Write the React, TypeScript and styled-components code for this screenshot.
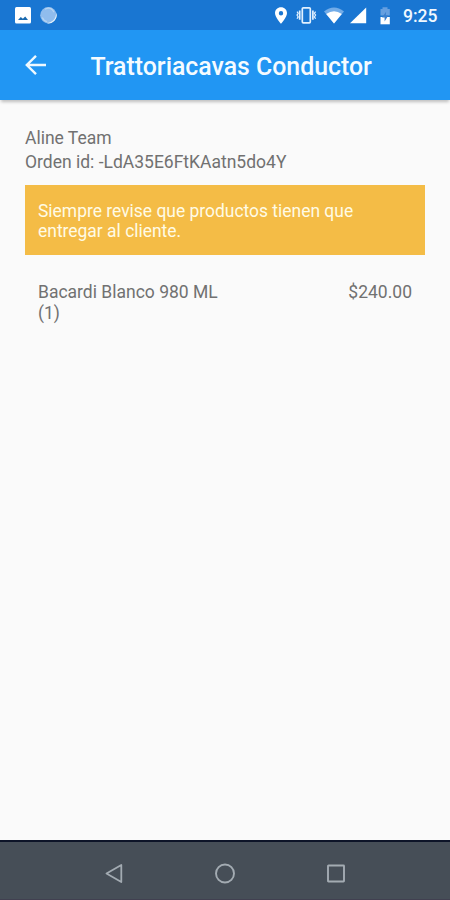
import React from 'react';
import styled, { createGlobalStyle } from 'styled-components';

const GlobalStyle = createGlobalStyle`
  * { box-sizing: border-box; }
  body { margin: 0; background: #fafafa; font-family: Roboto, "Liberation Sans", sans-serif; }
`;

const Screen = styled.div`
  display: flex;
  flex-direction: column;
  width: 450px;
  height: 900px;
  overflow: hidden;
  background: #fafafa;
`;

const StatusBar = styled.header`
  display: flex;
  justify-content: space-between;
  flex: 0 0 30px;
  padding: 0 11px 0 12px;
  background: #1976d2;
  svg { display: block; }
`;

const StatusGroup = styled.div`
  display: flex;
  align-items: center;
  height: 30px;
`;

const Clock = styled.span`
  width: 36px;
  margin-left: 10px;
  padding-top: 2px;
  color: #f1f8ff;
  font-size: 17.5px;
  font-weight: 500;
  line-height: 20px;
  white-space: nowrap;
`;

const AppBar = styled.nav`
  display: flex;
  align-items: center;
  flex: 0 0 70px;
  padding-left: 25px;
  background: #2196f3;
  box-shadow: 0 3px 3px -1px rgba(0, 0, 0, 0.24);
`;

const BackButton = styled.button`
  display: flex;
  width: 22px;
  height: 22px;
  padding: 0;
  border: 0;
  background: none;
`;

const Title = styled.h1`
  margin: 3px 0 0 43.5px;
  color: #f5fbff;
  font-size: 24.85px;
  font-weight: 500;
  line-height: 30px;
  white-space: nowrap;
`;

const Content = styled.main`
  flex: 1;
  padding: 26px 25px 0;
  color: #717171;
  font-size: 17.5px;
`;

const OrderLine = styled.p`
  margin: 0;
  line-height: 24px;
`;

const Notice = styled.section`
  height: 70px;
  margin-top: 11px;
  padding: 16px 13px;
  background: #f4bc46;
  color: #fffbe5;
  line-height: 20px;
`;

const NoticeLine = styled.span`
  display: block;
  font-size: 17.45px;
  white-space: nowrap;
`;

const ProductRow = styled.div`
  display: flex;
  justify-content: space-between;
  padding: 27px 13px 0;
  line-height: 20.5px;
`;

const Product = styled.div`
  width: 190px;
`;

const NavigationBar = styled.footer`
  display: flex;
  justify-content: space-between;
  align-items: center;
  flex: 0 0 60px;
  padding: 6px 104px 0;
  border-top: 2px solid #0d1428;
  border-bottom: 1px solid #414050;
  background: #464e57;
`;

const NavButton = styled.button`
  display: flex;
  width: 20px;
  height: 22px;
  padding: 0;
  border: 0;
  background: none;
`;

export default function App() {
  return (
    <Screen>
      <GlobalStyle />
      <StatusBar>
        <StatusGroup>
          <svg width="50" height="30" viewBox="12 0 50 30">
            <rect x="15" y="7" width="16" height="16.5" rx="1.5" fill="#fff" />
            <path d="m18 20 2.8-3 2.1 1.8 2.3-2.3 2.8 3.5z" fill="#1969af" />
            <circle cx="48.4" cy="15.2" r="8.2" fill="#90bced" />
            <path d="M56.2 12.5a8.2 8.2 0 0 1-9.8 10.6c6.7-.8 9.6-4.3 9.8-10.6z" fill="#e4f1f8" />
            <path d="M45 9.2q6-3 9 3M42.3 17.5q1.3 3.5 4.8 4" fill="none" stroke="#b6d4f2" strokeWidth="1.2" />
          </svg>
        </StatusGroup>
        <StatusGroup>
          <svg width="121" height="30" viewBox="272 0 121 30">
            <path fill="#fff" fillRule="evenodd" d="M281 7.2c-3.4 0-6 2.6-6 5.9 0 4.3 6 10.7 6 10.7s6-6.4 6-10.7c0-3.3-2.6-5.9-6-5.9zm0 3.8a2.2 2.2 0 1 1 0 4.4 2.2 2.2 0 0 1 0-4.4z" />
            <g fill="none" stroke="#e2f1ff" strokeWidth="1.7">
              <rect x="302.3" y="7.8" width="8" height="15" rx="1" />
              <path d="M299.7 10.5v9.3M312.9 10.5v9.3" />
              <path strokeWidth="1.2" d="m297 11.6 1.2 1.7-1.2 1.8 1.2 1.8-1.2 1.9M315.6 11.6l-1.2 1.7 1.2 1.8-1.2 1.8 1.2 1.9" />
            </g>
            <path d="M324 11.4Q334 3.8 344 11.4L334 23.5z" fill="#72ace8" />
            <path d="M326.2 14Q334 8.6 341.8 14L334 23.5z" fill="#fff" />
            <path d="M350 23.3 366.2 7.5v15.8z" fill="#fff" />
            <path d="M380.5 9h2V7.2h5V9h2.3v6.5h-9.3z" fill="#659fe0" />
            <path d="M380.5 17h9.3v7.3h-9.3z" fill="#fff" />
            <path d="m386.1 11.7-4 5.7h2.5v4l3.7-5.9h-2.5z" fill="#3b7fcd" />
          </svg>
          <Clock>9:25</Clock>
        </StatusGroup>
      </StatusBar>
      <AppBar>
        <BackButton aria-label="Volver">
          <svg width="22" height="22" viewBox="0 0 22 22" fill="none" stroke="#eef9ff" strokeWidth="2.4">
            <path d="M21 11H2.2M11 1.8 1.8 11l9.2 9.2" />
          </svg>
        </BackButton>
        <Title>Trattoriacavas Conductor</Title>
      </AppBar>
      <Content>
        <OrderLine>Aline Team</OrderLine>
        <OrderLine>Orden id: -LdA35E6FtKAatn5do4Y</OrderLine>
        <Notice>
          <NoticeLine>Siempre revise que productos tienen que</NoticeLine>
          <NoticeLine>entregar al cliente.</NoticeLine>
        </Notice>
        <ProductRow>
          <Product>Bacardi Blanco 980 ML<br />(1)</Product>
          <span>$240.00</span>
        </ProductRow>
      </Content>
      <NavigationBar>
        <NavButton aria-label="Atrás">
          <svg width="20" height="22" viewBox="0 0 20 22" fill="none" stroke="#a3abb2" strokeWidth="1.8" strokeLinejoin="round">
            <path d="M17.3 2v17L2.5 10.5z" />
          </svg>
        </NavButton>
        <NavButton aria-label="Inicio">
          <svg width="20" height="22" viewBox="0 0 20 22" fill="none" stroke="#a3abb2" strokeWidth="1.9">
            <circle cx="10" cy="10.5" r="9" />
          </svg>
        </NavButton>
        <NavButton aria-label="Aplicaciones recientes">
          <svg width="20" height="22" viewBox="0 0 20 22" fill="none" stroke="#a3abb2" strokeWidth="1.9">
            <rect x="2" y="2.5" width="16" height="16" rx=".5" />
          </svg>
        </NavButton>
      </NavigationBar>
    </Screen>
  );
}
